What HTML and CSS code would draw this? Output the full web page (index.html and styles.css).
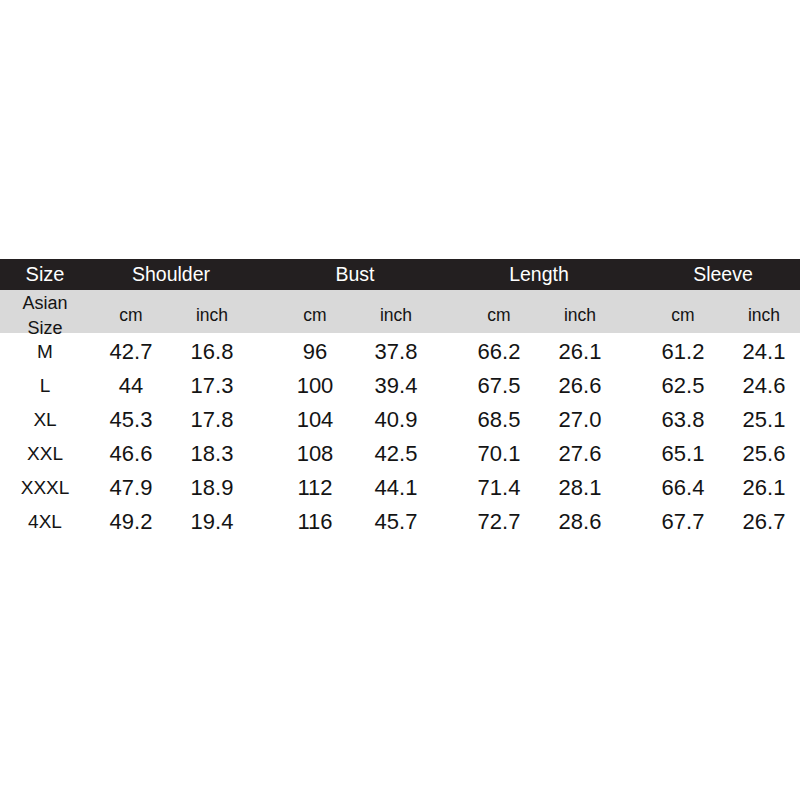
FILE: index.html
```html
<!DOCTYPE html>
<html>
<head>
<meta charset="utf-8">
<link rel="stylesheet" href="styles.css">
</head>
<body>
<div class="page">
  <div class="table">
    <div class="row head">
      <div class="c size">Size</div>
      <div class="c grp g1">Shoulder</div>
      <div class="c grp g2">Bust</div>
      <div class="c grp g3">Length</div>
      <div class="c grp g4">Sleeve</div>
    </div>
    <div class="row sub">
      <div class="c size asian">Asian<br>Size</div>
      <div class="c">cm</div><div class="c">inch</div><div></div>
      <div class="c">cm</div><div class="c">inch</div><div></div>
      <div class="c">cm</div><div class="c">inch</div><div></div>
      <div class="c">cm</div><div class="c">inch</div><div></div>
    </div>
    <div class="row data">
      <div class="c size">M</div>
      <div class="c">42.7</div><div class="c">16.8</div><div></div>
      <div class="c">96</div><div class="c">37.8</div><div></div>
      <div class="c">66.2</div><div class="c">26.1</div><div></div>
      <div class="c">61.2</div><div class="c">24.1</div><div></div>
    </div>
    <div class="row data">
      <div class="c size">L</div>
      <div class="c">44</div><div class="c">17.3</div><div></div>
      <div class="c">100</div><div class="c">39.4</div><div></div>
      <div class="c">67.5</div><div class="c">26.6</div><div></div>
      <div class="c">62.5</div><div class="c">24.6</div><div></div>
    </div>
    <div class="row data">
      <div class="c size">XL</div>
      <div class="c">45.3</div><div class="c">17.8</div><div></div>
      <div class="c">104</div><div class="c">40.9</div><div></div>
      <div class="c">68.5</div><div class="c">27.0</div><div></div>
      <div class="c">63.8</div><div class="c">25.1</div><div></div>
    </div>
    <div class="row data">
      <div class="c size">XXL</div>
      <div class="c">46.6</div><div class="c">18.3</div><div></div>
      <div class="c">108</div><div class="c">42.5</div><div></div>
      <div class="c">70.1</div><div class="c">27.6</div><div></div>
      <div class="c">65.1</div><div class="c">25.6</div><div></div>
    </div>
    <div class="row data">
      <div class="c size">XXXL</div>
      <div class="c">47.9</div><div class="c">18.9</div><div></div>
      <div class="c">112</div><div class="c">44.1</div><div></div>
      <div class="c">71.4</div><div class="c">28.1</div><div></div>
      <div class="c">66.4</div><div class="c">26.1</div><div></div>
    </div>
    <div class="row data">
      <div class="c size">4XL</div>
      <div class="c">49.2</div><div class="c">19.4</div><div></div>
      <div class="c">116</div><div class="c">45.7</div><div></div>
      <div class="c">72.7</div><div class="c">28.6</div><div></div>
      <div class="c">67.7</div><div class="c">26.7</div><div></div>
    </div>
  </div>
</div>
</body>
</html>
```

FILE: styles.css
```css
html, body {
  margin: 0;
  padding: 0;
  background: #ffffff;
}
.page {
  width: 800px;
  height: 800px;
  overflow: hidden;
  padding-top: 259px;
  box-sizing: border-box;
  font-family: "Liberation Sans", Arial, sans-serif;
  color: #141414;
}
.table {
  width: 826px;
}
.row {
  display: grid;
  grid-template-columns: 90px repeat(4, 82px 80px 22px);
  align-items: center;
}
.c {
  text-align: center;
  white-space: nowrap;
}
.head {
  height: 31px;
  background: #231f20;
  color: #ffffff;
  font-size: 19.5px;
}
.head .size {
  font-size: 20px;
}
.g1 { grid-column: 2 / 4; }
.g2 { grid-column: 5 / 7; }
.g3 { grid-column: 8 / 10; }
.g4 { grid-column: 11 / 13; }
.sub {
  height: 43px;
  background: #d9d9d9;
  font-size: 17.5px;
  margin-bottom: 2px;
}
.sub .asian {
  font-size: 18px;
  line-height: 25px;
  margin-top: 1px;
}
.data {
  height: 34px;
  font-size: 22px;
}
.data .size {
  font-size: 19px;
}
```
